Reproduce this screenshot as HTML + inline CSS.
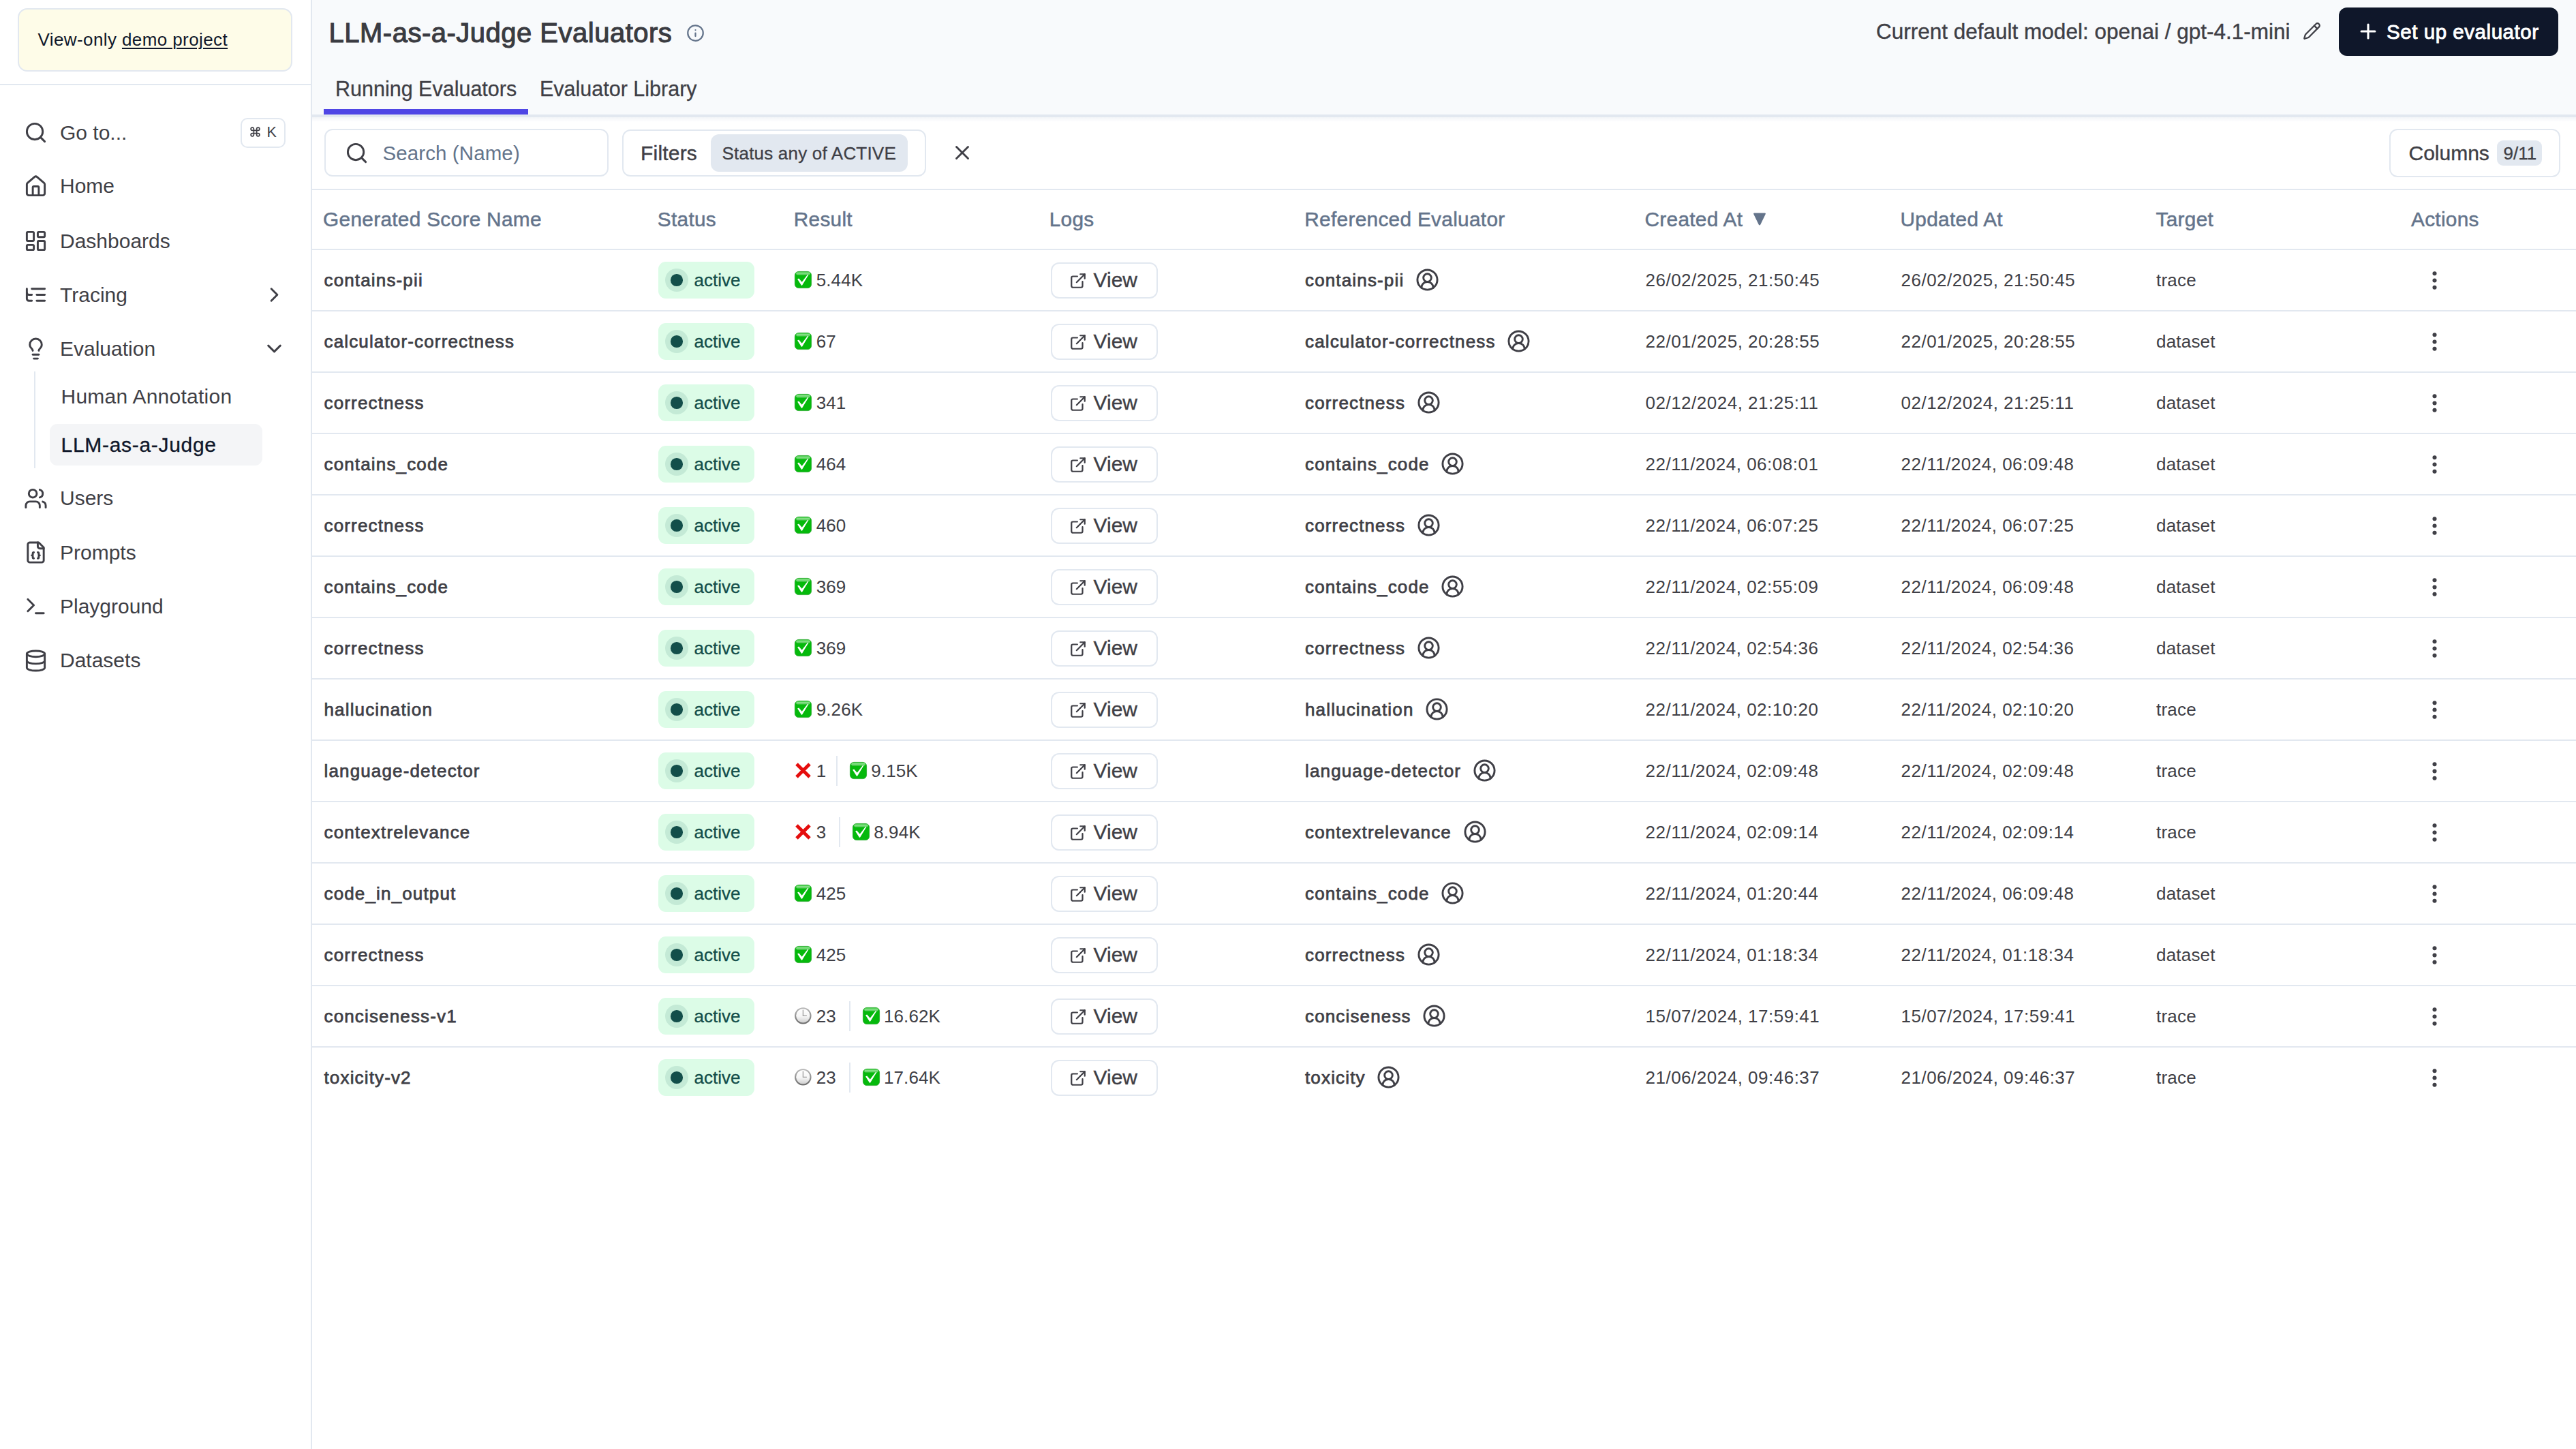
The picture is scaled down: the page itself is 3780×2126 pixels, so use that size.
<!DOCTYPE html>
<html><head><meta charset="utf-8"><title>LLM-as-a-Judge Evaluators</title>
<style>
html,body{margin:0;padding:0}
body{width:3780px;height:2126px;position:relative;overflow:hidden;background:#fff;font-family:'Liberation Sans', sans-serif}
.t{position:absolute;white-space:nowrap;line-height:1}
.b{position:absolute}
.i{position:absolute;overflow:visible}
</style></head><body>
<div class="b" style="left:456.0px;top:0.0px;width:2.0px;height:2126.0px;background:#e2e8f0"></div><div class="b" style="left:26.0px;top:11.5px;width:402.5px;height:93.0px;border:2px solid #e2e8f0;border-radius:14px;background:#fefce8;box-sizing:border-box"></div><div class="t" style="left:55.5px;top:45.2px;font-size:26px;color:#0f172a;font-weight:400;letter-spacing:0.4px;">View-only <span style="text-decoration:underline;text-underline-offset:3px;text-decoration-thickness:1.5px">demo project</span></div><div class="b" style="left:0.0px;top:123.0px;width:456.0px;height:2.0px;background:#e2e8f0"></div><svg class="i" style="left:35.0px;top:177.0px" width="35" height="35" viewBox="0 0 24 24" fill="none" stroke="#3f3f46" stroke-width="2" stroke-linecap="round" stroke-linejoin="round"><circle cx="11" cy="11" r="8"/><path d="m21 21-4.3-4.3"/></svg><div class="t" style="left:88.0px;top:179.5px;font-size:30px;color:#3f3f46;font-weight:400;letter-spacing:0px;">Go to...</div><svg class="i" style="left:35.0px;top:255.7px" width="35" height="35" viewBox="0 0 24 24" fill="none" stroke="#3f3f46" stroke-width="2" stroke-linecap="round" stroke-linejoin="round"><path d="M15 21v-8a1 1 0 0 0-1-1h-4a1 1 0 0 0-1 1v8"/><path d="M3 10a2 2 0 0 1 .709-1.528l7-5.999a2 2 0 0 1 2.582 0l7 5.999A2 2 0 0 1 21 10v9a2 2 0 0 1-2 2H5a2 2 0 0 1-2-2z"/></svg><div class="t" style="left:88.0px;top:258.2px;font-size:30px;color:#3f3f46;font-weight:400;letter-spacing:0px;">Home</div><svg class="i" style="left:35.0px;top:336.3px" width="35" height="35" viewBox="0 0 24 24" fill="none" stroke="#3f3f46" stroke-width="2" stroke-linecap="round" stroke-linejoin="round"><rect width="7" height="9" x="3" y="3" rx="1"/><rect width="7" height="5" x="14" y="3" rx="1"/><rect width="7" height="9" x="14" y="12" rx="1"/><rect width="7" height="5" x="3" y="16" rx="1"/></svg><div class="t" style="left:88.0px;top:338.8px;font-size:30px;color:#3f3f46;font-weight:400;letter-spacing:0px;">Dashboards</div><svg class="i" style="left:35.0px;top:415.4px" width="35" height="35" viewBox="0 0 24 24" fill="none" stroke="#3f3f46" stroke-width="2" stroke-linecap="round" stroke-linejoin="round"><path d="M21 12h-8"/><path d="M21 6H8"/><path d="M21 18h-8"/><path d="M3 6v4c0 1.1.9 2 2 2h3"/><path d="M3 10v6c0 1.1.9 2 2 2h3"/></svg><div class="t" style="left:88.0px;top:417.9px;font-size:30px;color:#3f3f46;font-weight:400;letter-spacing:0px;">Tracing</div><svg class="i" style="left:35.0px;top:494.3px" width="35" height="35" viewBox="0 0 24 24" fill="none" stroke="#3f3f46" stroke-width="2" stroke-linecap="round" stroke-linejoin="round"><path d="M15 14c.2-1 .7-1.7 1.5-2.5 1-.9 1.5-2.2 1.5-3.5A6 6 0 0 0 6 8c0 1 .2 2.2 1.5 3.5.7.7 1.3 1.5 1.5 2.5"/><path d="M9 18h6"/><path d="M10 22h4"/></svg><div class="t" style="left:88.0px;top:496.8px;font-size:30px;color:#3f3f46;font-weight:400;letter-spacing:0px;">Evaluation</div><svg class="i" style="left:35.0px;top:713.8px" width="35" height="35" viewBox="0 0 24 24" fill="none" stroke="#3f3f46" stroke-width="2" stroke-linecap="round" stroke-linejoin="round"><path d="M16 21v-2a4 4 0 0 0-4-4H6a4 4 0 0 0-4 4v2"/><circle cx="9" cy="7" r="4"/><path d="M22 21v-2a4 4 0 0 0-3-3.87"/><path d="M16 3.13a4 4 0 0 1 0 7.75"/></svg><div class="t" style="left:88.0px;top:716.3px;font-size:30px;color:#3f3f46;font-weight:400;letter-spacing:0px;">Users</div><svg class="i" style="left:35.0px;top:793.0px" width="35" height="35" viewBox="0 0 24 24" fill="none" stroke="#3f3f46" stroke-width="2" stroke-linecap="round" stroke-linejoin="round"><path d="M15 2H6a2 2 0 0 0-2 2v16a2 2 0 0 0 2 2h12a2 2 0 0 0 2-2V7Z"/><path d="M14 2v4a2 2 0 0 0 2 2h4"/><path d="M10 12a1 1 0 0 0-1 1v1a1 1 0 0 1-1 1 1 1 0 0 1 1 1v1a1 1 0 0 0 1 1"/><path d="M14 18a1 1 0 0 0 1-1v-1a1 1 0 0 1 1-1 1 1 0 0 1-1-1v-1a1 1 0 0 0-1-1"/></svg><div class="t" style="left:88.0px;top:795.5px;font-size:30px;color:#3f3f46;font-weight:400;letter-spacing:0px;">Prompts</div><svg class="i" style="left:35.0px;top:872.3px" width="35" height="35" viewBox="0 0 24 24" fill="none" stroke="#3f3f46" stroke-width="2" stroke-linecap="round" stroke-linejoin="round"><polyline points="4 17 10 11 4 5"/><line x1="12" x2="20" y1="19" y2="19"/></svg><div class="t" style="left:88.0px;top:874.8px;font-size:30px;color:#3f3f46;font-weight:400;letter-spacing:0px;">Playground</div><svg class="i" style="left:35.0px;top:951.5px" width="35" height="35" viewBox="0 0 24 24" fill="none" stroke="#3f3f46" stroke-width="2" stroke-linecap="round" stroke-linejoin="round"><ellipse cx="12" cy="5" rx="9" ry="3"/><path d="M3 5V19A9 3 0 0 0 21 19V5"/><path d="M3 12A9 3 0 0 0 21 12"/></svg><div class="t" style="left:88.0px;top:954.0px;font-size:30px;color:#3f3f46;font-weight:400;letter-spacing:0px;">Datasets</div><div class="b" style="left:352.5px;top:173.0px;width:66.5px;height:44.0px;border:2px solid #e2e8f0;border-radius:10px;box-sizing:border-box"></div><svg class="i" style="left:366.0px;top:185.0px" width="17" height="17" viewBox="0 0 24 24" fill="none" stroke="#3f3f46" stroke-width="2.4" stroke-linecap="round" stroke-linejoin="round"><path d="M15 6v12a3 3 0 1 0 3-3H6a3 3 0 1 0 3 3V6a3 3 0 1 0-3 3h12a3 3 0 1 0-3-3"/></svg><div class="t" style="left:391.5px;top:183.5px;font-size:21.5px;color:#3f3f46;font-weight:400;letter-spacing:0px;">K</div><svg class="i" style="left:385.0px;top:415.0px" width="35" height="35" viewBox="0 0 24 24" fill="none" stroke="#3f3f46" stroke-width="2" stroke-linecap="round" stroke-linejoin="round"><path d="m9 18 6-6-6-6"/></svg><svg class="i" style="left:385.0px;top:494.0px" width="35" height="35" viewBox="0 0 24 24" fill="none" stroke="#3f3f46" stroke-width="2" stroke-linecap="round" stroke-linejoin="round"><path d="m6 9 6 6 6-6"/></svg><div class="b" style="left:50.0px;top:545.0px;width:2.0px;height:142.0px;background:#e2e8f0"></div><div class="t" style="left:89.5px;top:566.5px;font-size:30px;color:#3f3f46;font-weight:400;letter-spacing:0.25px;">Human Annotation</div><div class="b" style="left:72.5px;top:622.0px;width:312.0px;height:61.0px;background:#f4f5f7;border-radius:11px"></div><div class="t" style="left:89.5px;top:637.5px;font-size:30px;color:#0f172a;font-weight:400;letter-spacing:0.7px;-webkit-text-stroke:0.35px #0f172a;">LLM-as-a-Judge</div><div class="b" style="left:458.0px;top:0.0px;width:3322.0px;height:170.0px;background:#f8fafc"></div><div class="b" style="left:458.0px;top:168.0px;width:3322.0px;height:4.0px;background:#e2e8f0"></div><div class="b" style="left:458.0px;top:172.0px;width:3322.0px;height:6.0px;background:linear-gradient(#f3f5f8,#fdfdfe)"></div><div class="t" style="left:482.5px;top:27.5px;font-size:40px;color:#3a3b41;font-weight:400;letter-spacing:0.5px;-webkit-text-stroke:1.1px #3a3b41;">LLM-as-a-Judge Evaluators</div><svg class="i" style="left:1006.5px;top:34.5px" width="27" height="27" viewBox="0 0 24 24" fill="none" stroke="#64748b" stroke-width="2" stroke-linecap="round" stroke-linejoin="round"><circle cx="12" cy="12" r="10"/><path d="M12 16v-4"/><path d="M12 8h.01"/></svg><div class="t" style="left:2753.0px;top:30.6px;font-size:31.5px;color:#3f3f46;font-weight:400;letter-spacing:0px;-webkit-text-stroke:0.4px #3f3f46;">Current default model: openai / gpt-4.1-mini</div><svg class="i" style="left:3378.5px;top:32.0px" width="27" height="27" viewBox="0 0 24 24" fill="none" stroke="#3f3f46" stroke-width="2" stroke-linecap="round" stroke-linejoin="round"><path d="M21.174 6.812a1 1 0 0 0-3.986-3.987L3.842 16.174a2 2 0 0 0-.5.83l-1.321 4.352a.5.5 0 0 0 .623.622l4.353-1.32a2 2 0 0 0 .83-.497z"/><path d="m15 5 4 4"/></svg><div class="b" style="left:3432.0px;top:11.3px;width:322.0px;height:70.5px;background:#0f172a;border-radius:12px"></div><svg class="i" style="left:3458.0px;top:29.0px" width="34" height="34" viewBox="0 0 24 24" fill="none" stroke="#fff" stroke-width="2.2" stroke-linecap="round" stroke-linejoin="round"><path d="M5 12h14"/><path d="M12 5v14"/></svg><div class="t" style="left:3502.0px;top:32.3px;font-size:29.5px;color:#fff;font-weight:400;letter-spacing:0.55px;-webkit-text-stroke:0.9px #fff;">Set up evaluator</div><div class="t" style="left:492.0px;top:114.5px;font-size:30.5px;color:#3f3f46;font-weight:400;letter-spacing:0px;-webkit-text-stroke:0.3px #3f3f46;">Running Evaluators</div><div class="t" style="left:792.0px;top:114.5px;font-size:30.5px;color:#3f3f46;font-weight:400;letter-spacing:0px;-webkit-text-stroke:0.3px #3f3f46;">Evaluator Library</div><div class="b" style="left:475.0px;top:160.0px;width:300.0px;height:8.0px;background:#4f46e5"></div><div class="b" style="left:476.0px;top:189.2px;width:417.0px;height:70.0px;border:2px solid #e2e8f0;border-radius:12px;box-sizing:border-box"></div><svg class="i" style="left:506.0px;top:207.0px" width="35" height="35" viewBox="0 0 24 24" fill="none" stroke="#3f3f46" stroke-width="2" stroke-linecap="round" stroke-linejoin="round"><circle cx="11" cy="11" r="8"/><path d="m21 21-4.3-4.3"/></svg><div class="t" style="left:561.5px;top:210.2px;font-size:29.5px;color:#64748b;font-weight:400;letter-spacing:0.1px;">Search (Name)</div><div class="b" style="left:912.7px;top:189.8px;width:446.5px;height:69.6px;border:2px solid #e2e8f0;border-radius:12px;box-sizing:border-box"></div><div class="t" style="left:940.0px;top:209.7px;font-size:30px;color:#3f3f46;font-weight:400;letter-spacing:0.2px;-webkit-text-stroke:0.45px #3f3f46;">Filters</div><div class="b" style="left:1043.0px;top:197.3px;width:288.5px;height:54.7px;background:#e2e8f0;border-radius:12px"></div><div class="t" style="left:1059.5px;top:211.9px;font-size:26px;color:#3f3f46;font-weight:400;letter-spacing:0.2px;-webkit-text-stroke:0.3px #3f3f46;">Status any of ACTIVE</div><svg class="i" style="left:1395.0px;top:207.0px" width="34" height="34" viewBox="0 0 24 24" fill="none" stroke="#3f3f46" stroke-width="2" stroke-linecap="round" stroke-linejoin="round"><path d="M18 6 6 18"/><path d="m6 6 12 12"/></svg><div class="b" style="left:3506.0px;top:189.4px;width:251.3px;height:70.3px;border:2px solid #e2e8f0;border-radius:12px;box-sizing:border-box"></div><div class="t" style="left:3534.5px;top:209.5px;font-size:30px;color:#3f3f46;font-weight:400;letter-spacing:0px;-webkit-text-stroke:0.4px #3f3f46;">Columns</div><div class="b" style="left:3664.0px;top:206.0px;width:66.0px;height:37.0px;background:#e2e8f0;border-radius:9px"></div><div class="t" style="left:3673.5px;top:211.9px;font-size:26px;color:#3f3f46;font-weight:400;letter-spacing:0px;-webkit-text-stroke:0.3px #3f3f46;">9/11</div><div class="b" style="left:458.0px;top:277.0px;width:3322.0px;height:2.0px;background:#e2e8f0"></div><div class="t" style="left:474.1px;top:306.7px;font-size:29.8px;color:#64748b;font-weight:400;letter-spacing:0.3px;-webkit-text-stroke:0.5px #64748b;">Generated Score Name</div><div class="t" style="left:964.8px;top:306.7px;font-size:29.8px;color:#64748b;font-weight:400;letter-spacing:0.3px;-webkit-text-stroke:0.5px #64748b;">Status</div><div class="t" style="left:1164.7px;top:306.7px;font-size:29.8px;color:#64748b;font-weight:400;letter-spacing:0.3px;-webkit-text-stroke:0.5px #64748b;">Result</div><div class="t" style="left:1539.7px;top:306.7px;font-size:29.8px;color:#64748b;font-weight:400;letter-spacing:0.3px;-webkit-text-stroke:0.5px #64748b;">Logs</div><div class="t" style="left:1914.3px;top:306.7px;font-size:29.8px;color:#64748b;font-weight:400;letter-spacing:0.3px;-webkit-text-stroke:0.5px #64748b;">Referenced Evaluator</div><div class="t" style="left:2413.5px;top:306.7px;font-size:29.8px;color:#64748b;font-weight:400;letter-spacing:0.3px;-webkit-text-stroke:0.5px #64748b;">Created At</div><div class="t" style="left:2788.5px;top:306.7px;font-size:29.8px;color:#64748b;font-weight:400;letter-spacing:0.3px;-webkit-text-stroke:0.5px #64748b;">Updated At</div><div class="t" style="left:3163.5px;top:306.7px;font-size:29.8px;color:#64748b;font-weight:400;letter-spacing:0.3px;-webkit-text-stroke:0.5px #64748b;">Target</div><div class="t" style="left:3538.0px;top:306.7px;font-size:29.8px;color:#64748b;font-weight:400;letter-spacing:0.3px;-webkit-text-stroke:0.5px #64748b;">Actions</div><svg class="i" style="left:2572px;top:311px" width="20" height="21" viewBox="0 0 20 21"><path d="M2.2 1.5 H17.8 Q19.6 1.5 18.7 3.2 L11.3 18.6 Q10 20.6 8.7 18.6 L1.3 3.2 Q0.4 1.5 2.2 1.5 Z" fill="#64748b"/></svg><div class="b" style="left:458.0px;top:365.0px;width:3322.0px;height:2.0px;background:#e2e8f0"></div><div class="b" style="left:458.0px;top:455.0px;width:3322.0px;height:2.0px;background:#e2e8f0"></div><div class="t" style="left:475.5px;top:398.1px;font-size:26px;color:#3f3f46;font-weight:400;letter-spacing:1.15px;-webkit-text-stroke:0.75px #3f3f46;">contains-pii</div><div class="b" style="left:966.0px;top:384.0px;width:141.0px;height:54.0px;background:#dcfce7;border-radius:11px"></div><div class="b" style="left:976px;top:394px;width:34px;height:34px;border-radius:50%;background:#c4ead6"></div><div class="b" style="left:984.3px;top:402.3px;width:17.4px;height:17.4px;border-radius:50%;background:#134e4a"></div><div class="t" style="left:1018.5px;top:397.6px;font-size:26px;color:#134e4a;font-weight:400;letter-spacing:0px;-webkit-text-stroke:0.3px #134e4a;">active</div><svg class="i" style="left:1166.2px;top:398.4px" width="25" height="25" viewBox="0 0 25 25"><defs><linearGradient id="gh1" x1="0" y1="0" x2="0" y2="1"><stop offset="0" stop-color="#93e894"/><stop offset="1" stop-color="#58ca5b"/></linearGradient></defs><rect x="0.4" y="0.4" width="24.2" height="24.2" rx="5.5" fill="#05b90c" stroke="#2aa82d" stroke-width="0.8"/><rect x="2.2" y="1.6" width="20.6" height="3.9" rx="1.9" fill="url(#gh1)"/><path d="M4.1 11.4 L6.2 10.5 L10.7 15.7 L19.2 4.8 L20.4 5.3 L11.0 20.8 L10.0 20.8 Z" fill="#fff"/></svg><div class="t" style="left:1197.7px;top:398.1px;font-size:26px;color:#3f3f46;font-weight:400;letter-spacing:0.1px;">5.44K</div><div class="b" style="left:1541.5px;top:385.0px;width:157.0px;height:52.6px;border:2px solid #e2e8f0;border-radius:12px;box-sizing:border-box"></div><svg class="i" style="left:1569.0px;top:398.5px" width="26" height="26" viewBox="0 0 24 24" fill="none" stroke="#3f3f46" stroke-width="2.05" stroke-linecap="round" stroke-linejoin="round"><path d="M15 3h6v6"/><path d="M10 14 21 3"/><path d="M18 13v6a2 2 0 0 1-2 2H5a2 2 0 0 1-2-2V8a2 2 0 0 1 2-2h6"/></svg><div class="t" style="left:1604.5px;top:395.8px;font-size:30px;color:#3f3f46;font-weight:400;letter-spacing:0px;-webkit-text-stroke:0.4px #3f3f46;">View</div><div class="t" style="left:1915.0px;top:398.1px;font-size:26px;color:#3f3f46;font-weight:400;letter-spacing:1.15px;-webkit-text-stroke:0.75px #3f3f46;">contains-pii</div><svg class="i" style="left:2076.8px;top:392.5px" width="35" height="35" viewBox="0 0 24 24" fill="none" stroke="#3f3f46" stroke-width="2.0" stroke-linecap="round" stroke-linejoin="round"><path d="M18 20a6 6 0 0 0-12 0"/><circle cx="12" cy="10" r="4"/><circle cx="12" cy="12" r="10"/></svg><div class="t" style="left:2414.5px;top:398.1px;font-size:26px;color:#3f3f46;font-weight:400;letter-spacing:0.5px;">26/02/2025, 21:50:45</div><div class="t" style="left:2789.5px;top:398.1px;font-size:26px;color:#3f3f46;font-weight:400;letter-spacing:0.5px;">26/02/2025, 21:50:45</div><div class="t" style="left:3164.0px;top:398.1px;font-size:26px;color:#3f3f46;font-weight:400;letter-spacing:0.2px;">trace</div><svg class="i" style="left:3555.0px;top:394.0px" width="35" height="35" viewBox="0 0 24 24" fill="none" stroke="#3f3f46" stroke-width="2.2" stroke-linecap="round" stroke-linejoin="round"><circle cx="12" cy="12" r="1"/><circle cx="12" cy="5" r="1"/><circle cx="12" cy="19" r="1"/></svg><div class="b" style="left:458.0px;top:545.0px;width:3322.0px;height:2.0px;background:#e2e8f0"></div><div class="t" style="left:475.5px;top:488.1px;font-size:26px;color:#3f3f46;font-weight:400;letter-spacing:1.15px;-webkit-text-stroke:0.75px #3f3f46;">calculator-correctness</div><div class="b" style="left:966.0px;top:474.0px;width:141.0px;height:54.0px;background:#dcfce7;border-radius:11px"></div><div class="b" style="left:976px;top:484px;width:34px;height:34px;border-radius:50%;background:#c4ead6"></div><div class="b" style="left:984.3px;top:492.3px;width:17.4px;height:17.4px;border-radius:50%;background:#134e4a"></div><div class="t" style="left:1018.5px;top:487.6px;font-size:26px;color:#134e4a;font-weight:400;letter-spacing:0px;-webkit-text-stroke:0.3px #134e4a;">active</div><svg class="i" style="left:1166.2px;top:488.4px" width="25" height="25" viewBox="0 0 25 25"><defs><linearGradient id="gh2" x1="0" y1="0" x2="0" y2="1"><stop offset="0" stop-color="#93e894"/><stop offset="1" stop-color="#58ca5b"/></linearGradient></defs><rect x="0.4" y="0.4" width="24.2" height="24.2" rx="5.5" fill="#05b90c" stroke="#2aa82d" stroke-width="0.8"/><rect x="2.2" y="1.6" width="20.6" height="3.9" rx="1.9" fill="url(#gh2)"/><path d="M4.1 11.4 L6.2 10.5 L10.7 15.7 L19.2 4.8 L20.4 5.3 L11.0 20.8 L10.0 20.8 Z" fill="#fff"/></svg><div class="t" style="left:1197.7px;top:488.1px;font-size:26px;color:#3f3f46;font-weight:400;letter-spacing:0.1px;">67</div><div class="b" style="left:1541.5px;top:475.0px;width:157.0px;height:52.6px;border:2px solid #e2e8f0;border-radius:12px;box-sizing:border-box"></div><svg class="i" style="left:1569.0px;top:488.5px" width="26" height="26" viewBox="0 0 24 24" fill="none" stroke="#3f3f46" stroke-width="2.05" stroke-linecap="round" stroke-linejoin="round"><path d="M15 3h6v6"/><path d="M10 14 21 3"/><path d="M18 13v6a2 2 0 0 1-2 2H5a2 2 0 0 1-2-2V8a2 2 0 0 1 2-2h6"/></svg><div class="t" style="left:1604.5px;top:485.8px;font-size:30px;color:#3f3f46;font-weight:400;letter-spacing:0px;-webkit-text-stroke:0.4px #3f3f46;">View</div><div class="t" style="left:1915.0px;top:488.1px;font-size:26px;color:#3f3f46;font-weight:400;letter-spacing:1.15px;-webkit-text-stroke:0.75px #3f3f46;">calculator-correctness</div><svg class="i" style="left:2211.1px;top:482.5px" width="35" height="35" viewBox="0 0 24 24" fill="none" stroke="#3f3f46" stroke-width="2.0" stroke-linecap="round" stroke-linejoin="round"><path d="M18 20a6 6 0 0 0-12 0"/><circle cx="12" cy="10" r="4"/><circle cx="12" cy="12" r="10"/></svg><div class="t" style="left:2414.5px;top:488.1px;font-size:26px;color:#3f3f46;font-weight:400;letter-spacing:0.5px;">22/01/2025, 20:28:55</div><div class="t" style="left:2789.5px;top:488.1px;font-size:26px;color:#3f3f46;font-weight:400;letter-spacing:0.5px;">22/01/2025, 20:28:55</div><div class="t" style="left:3164.0px;top:488.1px;font-size:26px;color:#3f3f46;font-weight:400;letter-spacing:0.2px;">dataset</div><svg class="i" style="left:3555.0px;top:484.0px" width="35" height="35" viewBox="0 0 24 24" fill="none" stroke="#3f3f46" stroke-width="2.2" stroke-linecap="round" stroke-linejoin="round"><circle cx="12" cy="12" r="1"/><circle cx="12" cy="5" r="1"/><circle cx="12" cy="19" r="1"/></svg><div class="b" style="left:458.0px;top:635.0px;width:3322.0px;height:2.0px;background:#e2e8f0"></div><div class="t" style="left:475.5px;top:578.1px;font-size:26px;color:#3f3f46;font-weight:400;letter-spacing:1.15px;-webkit-text-stroke:0.75px #3f3f46;">correctness</div><div class="b" style="left:966.0px;top:564.0px;width:141.0px;height:54.0px;background:#dcfce7;border-radius:11px"></div><div class="b" style="left:976px;top:574px;width:34px;height:34px;border-radius:50%;background:#c4ead6"></div><div class="b" style="left:984.3px;top:582.3px;width:17.4px;height:17.4px;border-radius:50%;background:#134e4a"></div><div class="t" style="left:1018.5px;top:577.6px;font-size:26px;color:#134e4a;font-weight:400;letter-spacing:0px;-webkit-text-stroke:0.3px #134e4a;">active</div><svg class="i" style="left:1166.2px;top:578.4px" width="25" height="25" viewBox="0 0 25 25"><defs><linearGradient id="gh3" x1="0" y1="0" x2="0" y2="1"><stop offset="0" stop-color="#93e894"/><stop offset="1" stop-color="#58ca5b"/></linearGradient></defs><rect x="0.4" y="0.4" width="24.2" height="24.2" rx="5.5" fill="#05b90c" stroke="#2aa82d" stroke-width="0.8"/><rect x="2.2" y="1.6" width="20.6" height="3.9" rx="1.9" fill="url(#gh3)"/><path d="M4.1 11.4 L6.2 10.5 L10.7 15.7 L19.2 4.8 L20.4 5.3 L11.0 20.8 L10.0 20.8 Z" fill="#fff"/></svg><div class="t" style="left:1197.7px;top:578.1px;font-size:26px;color:#3f3f46;font-weight:400;letter-spacing:0.1px;">341</div><div class="b" style="left:1541.5px;top:565.0px;width:157.0px;height:52.6px;border:2px solid #e2e8f0;border-radius:12px;box-sizing:border-box"></div><svg class="i" style="left:1569.0px;top:578.5px" width="26" height="26" viewBox="0 0 24 24" fill="none" stroke="#3f3f46" stroke-width="2.05" stroke-linecap="round" stroke-linejoin="round"><path d="M15 3h6v6"/><path d="M10 14 21 3"/><path d="M18 13v6a2 2 0 0 1-2 2H5a2 2 0 0 1-2-2V8a2 2 0 0 1 2-2h6"/></svg><div class="t" style="left:1604.5px;top:575.8px;font-size:30px;color:#3f3f46;font-weight:400;letter-spacing:0px;-webkit-text-stroke:0.4px #3f3f46;">View</div><div class="t" style="left:1915.0px;top:578.1px;font-size:26px;color:#3f3f46;font-weight:400;letter-spacing:1.15px;-webkit-text-stroke:0.75px #3f3f46;">correctness</div><svg class="i" style="left:2078.5px;top:572.5px" width="35" height="35" viewBox="0 0 24 24" fill="none" stroke="#3f3f46" stroke-width="2.0" stroke-linecap="round" stroke-linejoin="round"><path d="M18 20a6 6 0 0 0-12 0"/><circle cx="12" cy="10" r="4"/><circle cx="12" cy="12" r="10"/></svg><div class="t" style="left:2414.5px;top:578.1px;font-size:26px;color:#3f3f46;font-weight:400;letter-spacing:0.5px;">02/12/2024, 21:25:11</div><div class="t" style="left:2789.5px;top:578.1px;font-size:26px;color:#3f3f46;font-weight:400;letter-spacing:0.5px;">02/12/2024, 21:25:11</div><div class="t" style="left:3164.0px;top:578.1px;font-size:26px;color:#3f3f46;font-weight:400;letter-spacing:0.2px;">dataset</div><svg class="i" style="left:3555.0px;top:574.0px" width="35" height="35" viewBox="0 0 24 24" fill="none" stroke="#3f3f46" stroke-width="2.2" stroke-linecap="round" stroke-linejoin="round"><circle cx="12" cy="12" r="1"/><circle cx="12" cy="5" r="1"/><circle cx="12" cy="19" r="1"/></svg><div class="b" style="left:458.0px;top:725.0px;width:3322.0px;height:2.0px;background:#e2e8f0"></div><div class="t" style="left:475.5px;top:668.1px;font-size:26px;color:#3f3f46;font-weight:400;letter-spacing:1.15px;-webkit-text-stroke:0.75px #3f3f46;">contains_code</div><div class="b" style="left:966.0px;top:654.0px;width:141.0px;height:54.0px;background:#dcfce7;border-radius:11px"></div><div class="b" style="left:976px;top:664px;width:34px;height:34px;border-radius:50%;background:#c4ead6"></div><div class="b" style="left:984.3px;top:672.3px;width:17.4px;height:17.4px;border-radius:50%;background:#134e4a"></div><div class="t" style="left:1018.5px;top:667.6px;font-size:26px;color:#134e4a;font-weight:400;letter-spacing:0px;-webkit-text-stroke:0.3px #134e4a;">active</div><svg class="i" style="left:1166.2px;top:668.4px" width="25" height="25" viewBox="0 0 25 25"><defs><linearGradient id="gh4" x1="0" y1="0" x2="0" y2="1"><stop offset="0" stop-color="#93e894"/><stop offset="1" stop-color="#58ca5b"/></linearGradient></defs><rect x="0.4" y="0.4" width="24.2" height="24.2" rx="5.5" fill="#05b90c" stroke="#2aa82d" stroke-width="0.8"/><rect x="2.2" y="1.6" width="20.6" height="3.9" rx="1.9" fill="url(#gh4)"/><path d="M4.1 11.4 L6.2 10.5 L10.7 15.7 L19.2 4.8 L20.4 5.3 L11.0 20.8 L10.0 20.8 Z" fill="#fff"/></svg><div class="t" style="left:1197.7px;top:668.1px;font-size:26px;color:#3f3f46;font-weight:400;letter-spacing:0.1px;">464</div><div class="b" style="left:1541.5px;top:655.0px;width:157.0px;height:52.6px;border:2px solid #e2e8f0;border-radius:12px;box-sizing:border-box"></div><svg class="i" style="left:1569.0px;top:668.5px" width="26" height="26" viewBox="0 0 24 24" fill="none" stroke="#3f3f46" stroke-width="2.05" stroke-linecap="round" stroke-linejoin="round"><path d="M15 3h6v6"/><path d="M10 14 21 3"/><path d="M18 13v6a2 2 0 0 1-2 2H5a2 2 0 0 1-2-2V8a2 2 0 0 1 2-2h6"/></svg><div class="t" style="left:1604.5px;top:665.8px;font-size:30px;color:#3f3f46;font-weight:400;letter-spacing:0px;-webkit-text-stroke:0.4px #3f3f46;">View</div><div class="t" style="left:1915.0px;top:668.1px;font-size:26px;color:#3f3f46;font-weight:400;letter-spacing:1.15px;-webkit-text-stroke:0.75px #3f3f46;">contains_code</div><svg class="i" style="left:2114.1px;top:662.5px" width="35" height="35" viewBox="0 0 24 24" fill="none" stroke="#3f3f46" stroke-width="2.0" stroke-linecap="round" stroke-linejoin="round"><path d="M18 20a6 6 0 0 0-12 0"/><circle cx="12" cy="10" r="4"/><circle cx="12" cy="12" r="10"/></svg><div class="t" style="left:2414.5px;top:668.1px;font-size:26px;color:#3f3f46;font-weight:400;letter-spacing:0.5px;">22/11/2024, 06:08:01</div><div class="t" style="left:2789.5px;top:668.1px;font-size:26px;color:#3f3f46;font-weight:400;letter-spacing:0.5px;">22/11/2024, 06:09:48</div><div class="t" style="left:3164.0px;top:668.1px;font-size:26px;color:#3f3f46;font-weight:400;letter-spacing:0.2px;">dataset</div><svg class="i" style="left:3555.0px;top:664.0px" width="35" height="35" viewBox="0 0 24 24" fill="none" stroke="#3f3f46" stroke-width="2.2" stroke-linecap="round" stroke-linejoin="round"><circle cx="12" cy="12" r="1"/><circle cx="12" cy="5" r="1"/><circle cx="12" cy="19" r="1"/></svg><div class="b" style="left:458.0px;top:815.0px;width:3322.0px;height:2.0px;background:#e2e8f0"></div><div class="t" style="left:475.5px;top:758.1px;font-size:26px;color:#3f3f46;font-weight:400;letter-spacing:1.15px;-webkit-text-stroke:0.75px #3f3f46;">correctness</div><div class="b" style="left:966.0px;top:744.0px;width:141.0px;height:54.0px;background:#dcfce7;border-radius:11px"></div><div class="b" style="left:976px;top:754px;width:34px;height:34px;border-radius:50%;background:#c4ead6"></div><div class="b" style="left:984.3px;top:762.3px;width:17.4px;height:17.4px;border-radius:50%;background:#134e4a"></div><div class="t" style="left:1018.5px;top:757.6px;font-size:26px;color:#134e4a;font-weight:400;letter-spacing:0px;-webkit-text-stroke:0.3px #134e4a;">active</div><svg class="i" style="left:1166.2px;top:758.4px" width="25" height="25" viewBox="0 0 25 25"><defs><linearGradient id="gh5" x1="0" y1="0" x2="0" y2="1"><stop offset="0" stop-color="#93e894"/><stop offset="1" stop-color="#58ca5b"/></linearGradient></defs><rect x="0.4" y="0.4" width="24.2" height="24.2" rx="5.5" fill="#05b90c" stroke="#2aa82d" stroke-width="0.8"/><rect x="2.2" y="1.6" width="20.6" height="3.9" rx="1.9" fill="url(#gh5)"/><path d="M4.1 11.4 L6.2 10.5 L10.7 15.7 L19.2 4.8 L20.4 5.3 L11.0 20.8 L10.0 20.8 Z" fill="#fff"/></svg><div class="t" style="left:1197.7px;top:758.1px;font-size:26px;color:#3f3f46;font-weight:400;letter-spacing:0.1px;">460</div><div class="b" style="left:1541.5px;top:745.0px;width:157.0px;height:52.6px;border:2px solid #e2e8f0;border-radius:12px;box-sizing:border-box"></div><svg class="i" style="left:1569.0px;top:758.5px" width="26" height="26" viewBox="0 0 24 24" fill="none" stroke="#3f3f46" stroke-width="2.05" stroke-linecap="round" stroke-linejoin="round"><path d="M15 3h6v6"/><path d="M10 14 21 3"/><path d="M18 13v6a2 2 0 0 1-2 2H5a2 2 0 0 1-2-2V8a2 2 0 0 1 2-2h6"/></svg><div class="t" style="left:1604.5px;top:755.8px;font-size:30px;color:#3f3f46;font-weight:400;letter-spacing:0px;-webkit-text-stroke:0.4px #3f3f46;">View</div><div class="t" style="left:1915.0px;top:758.1px;font-size:26px;color:#3f3f46;font-weight:400;letter-spacing:1.15px;-webkit-text-stroke:0.75px #3f3f46;">correctness</div><svg class="i" style="left:2078.5px;top:752.5px" width="35" height="35" viewBox="0 0 24 24" fill="none" stroke="#3f3f46" stroke-width="2.0" stroke-linecap="round" stroke-linejoin="round"><path d="M18 20a6 6 0 0 0-12 0"/><circle cx="12" cy="10" r="4"/><circle cx="12" cy="12" r="10"/></svg><div class="t" style="left:2414.5px;top:758.1px;font-size:26px;color:#3f3f46;font-weight:400;letter-spacing:0.5px;">22/11/2024, 06:07:25</div><div class="t" style="left:2789.5px;top:758.1px;font-size:26px;color:#3f3f46;font-weight:400;letter-spacing:0.5px;">22/11/2024, 06:07:25</div><div class="t" style="left:3164.0px;top:758.1px;font-size:26px;color:#3f3f46;font-weight:400;letter-spacing:0.2px;">dataset</div><svg class="i" style="left:3555.0px;top:754.0px" width="35" height="35" viewBox="0 0 24 24" fill="none" stroke="#3f3f46" stroke-width="2.2" stroke-linecap="round" stroke-linejoin="round"><circle cx="12" cy="12" r="1"/><circle cx="12" cy="5" r="1"/><circle cx="12" cy="19" r="1"/></svg><div class="b" style="left:458.0px;top:905.0px;width:3322.0px;height:2.0px;background:#e2e8f0"></div><div class="t" style="left:475.5px;top:848.1px;font-size:26px;color:#3f3f46;font-weight:400;letter-spacing:1.15px;-webkit-text-stroke:0.75px #3f3f46;">contains_code</div><div class="b" style="left:966.0px;top:834.0px;width:141.0px;height:54.0px;background:#dcfce7;border-radius:11px"></div><div class="b" style="left:976px;top:844px;width:34px;height:34px;border-radius:50%;background:#c4ead6"></div><div class="b" style="left:984.3px;top:852.3px;width:17.4px;height:17.4px;border-radius:50%;background:#134e4a"></div><div class="t" style="left:1018.5px;top:847.6px;font-size:26px;color:#134e4a;font-weight:400;letter-spacing:0px;-webkit-text-stroke:0.3px #134e4a;">active</div><svg class="i" style="left:1166.2px;top:848.4px" width="25" height="25" viewBox="0 0 25 25"><defs><linearGradient id="gh6" x1="0" y1="0" x2="0" y2="1"><stop offset="0" stop-color="#93e894"/><stop offset="1" stop-color="#58ca5b"/></linearGradient></defs><rect x="0.4" y="0.4" width="24.2" height="24.2" rx="5.5" fill="#05b90c" stroke="#2aa82d" stroke-width="0.8"/><rect x="2.2" y="1.6" width="20.6" height="3.9" rx="1.9" fill="url(#gh6)"/><path d="M4.1 11.4 L6.2 10.5 L10.7 15.7 L19.2 4.8 L20.4 5.3 L11.0 20.8 L10.0 20.8 Z" fill="#fff"/></svg><div class="t" style="left:1197.7px;top:848.1px;font-size:26px;color:#3f3f46;font-weight:400;letter-spacing:0.1px;">369</div><div class="b" style="left:1541.5px;top:835.0px;width:157.0px;height:52.6px;border:2px solid #e2e8f0;border-radius:12px;box-sizing:border-box"></div><svg class="i" style="left:1569.0px;top:848.5px" width="26" height="26" viewBox="0 0 24 24" fill="none" stroke="#3f3f46" stroke-width="2.05" stroke-linecap="round" stroke-linejoin="round"><path d="M15 3h6v6"/><path d="M10 14 21 3"/><path d="M18 13v6a2 2 0 0 1-2 2H5a2 2 0 0 1-2-2V8a2 2 0 0 1 2-2h6"/></svg><div class="t" style="left:1604.5px;top:845.8px;font-size:30px;color:#3f3f46;font-weight:400;letter-spacing:0px;-webkit-text-stroke:0.4px #3f3f46;">View</div><div class="t" style="left:1915.0px;top:848.1px;font-size:26px;color:#3f3f46;font-weight:400;letter-spacing:1.15px;-webkit-text-stroke:0.75px #3f3f46;">contains_code</div><svg class="i" style="left:2114.1px;top:842.5px" width="35" height="35" viewBox="0 0 24 24" fill="none" stroke="#3f3f46" stroke-width="2.0" stroke-linecap="round" stroke-linejoin="round"><path d="M18 20a6 6 0 0 0-12 0"/><circle cx="12" cy="10" r="4"/><circle cx="12" cy="12" r="10"/></svg><div class="t" style="left:2414.5px;top:848.1px;font-size:26px;color:#3f3f46;font-weight:400;letter-spacing:0.5px;">22/11/2024, 02:55:09</div><div class="t" style="left:2789.5px;top:848.1px;font-size:26px;color:#3f3f46;font-weight:400;letter-spacing:0.5px;">22/11/2024, 06:09:48</div><div class="t" style="left:3164.0px;top:848.1px;font-size:26px;color:#3f3f46;font-weight:400;letter-spacing:0.2px;">dataset</div><svg class="i" style="left:3555.0px;top:844.0px" width="35" height="35" viewBox="0 0 24 24" fill="none" stroke="#3f3f46" stroke-width="2.2" stroke-linecap="round" stroke-linejoin="round"><circle cx="12" cy="12" r="1"/><circle cx="12" cy="5" r="1"/><circle cx="12" cy="19" r="1"/></svg><div class="b" style="left:458.0px;top:995.0px;width:3322.0px;height:2.0px;background:#e2e8f0"></div><div class="t" style="left:475.5px;top:938.1px;font-size:26px;color:#3f3f46;font-weight:400;letter-spacing:1.15px;-webkit-text-stroke:0.75px #3f3f46;">correctness</div><div class="b" style="left:966.0px;top:924.0px;width:141.0px;height:54.0px;background:#dcfce7;border-radius:11px"></div><div class="b" style="left:976px;top:934px;width:34px;height:34px;border-radius:50%;background:#c4ead6"></div><div class="b" style="left:984.3px;top:942.3px;width:17.4px;height:17.4px;border-radius:50%;background:#134e4a"></div><div class="t" style="left:1018.5px;top:937.6px;font-size:26px;color:#134e4a;font-weight:400;letter-spacing:0px;-webkit-text-stroke:0.3px #134e4a;">active</div><svg class="i" style="left:1166.2px;top:938.4px" width="25" height="25" viewBox="0 0 25 25"><defs><linearGradient id="gh7" x1="0" y1="0" x2="0" y2="1"><stop offset="0" stop-color="#93e894"/><stop offset="1" stop-color="#58ca5b"/></linearGradient></defs><rect x="0.4" y="0.4" width="24.2" height="24.2" rx="5.5" fill="#05b90c" stroke="#2aa82d" stroke-width="0.8"/><rect x="2.2" y="1.6" width="20.6" height="3.9" rx="1.9" fill="url(#gh7)"/><path d="M4.1 11.4 L6.2 10.5 L10.7 15.7 L19.2 4.8 L20.4 5.3 L11.0 20.8 L10.0 20.8 Z" fill="#fff"/></svg><div class="t" style="left:1197.7px;top:938.1px;font-size:26px;color:#3f3f46;font-weight:400;letter-spacing:0.1px;">369</div><div class="b" style="left:1541.5px;top:925.0px;width:157.0px;height:52.6px;border:2px solid #e2e8f0;border-radius:12px;box-sizing:border-box"></div><svg class="i" style="left:1569.0px;top:938.5px" width="26" height="26" viewBox="0 0 24 24" fill="none" stroke="#3f3f46" stroke-width="2.05" stroke-linecap="round" stroke-linejoin="round"><path d="M15 3h6v6"/><path d="M10 14 21 3"/><path d="M18 13v6a2 2 0 0 1-2 2H5a2 2 0 0 1-2-2V8a2 2 0 0 1 2-2h6"/></svg><div class="t" style="left:1604.5px;top:935.8px;font-size:30px;color:#3f3f46;font-weight:400;letter-spacing:0px;-webkit-text-stroke:0.4px #3f3f46;">View</div><div class="t" style="left:1915.0px;top:938.1px;font-size:26px;color:#3f3f46;font-weight:400;letter-spacing:1.15px;-webkit-text-stroke:0.75px #3f3f46;">correctness</div><svg class="i" style="left:2078.5px;top:932.5px" width="35" height="35" viewBox="0 0 24 24" fill="none" stroke="#3f3f46" stroke-width="2.0" stroke-linecap="round" stroke-linejoin="round"><path d="M18 20a6 6 0 0 0-12 0"/><circle cx="12" cy="10" r="4"/><circle cx="12" cy="12" r="10"/></svg><div class="t" style="left:2414.5px;top:938.1px;font-size:26px;color:#3f3f46;font-weight:400;letter-spacing:0.5px;">22/11/2024, 02:54:36</div><div class="t" style="left:2789.5px;top:938.1px;font-size:26px;color:#3f3f46;font-weight:400;letter-spacing:0.5px;">22/11/2024, 02:54:36</div><div class="t" style="left:3164.0px;top:938.1px;font-size:26px;color:#3f3f46;font-weight:400;letter-spacing:0.2px;">dataset</div><svg class="i" style="left:3555.0px;top:934.0px" width="35" height="35" viewBox="0 0 24 24" fill="none" stroke="#3f3f46" stroke-width="2.2" stroke-linecap="round" stroke-linejoin="round"><circle cx="12" cy="12" r="1"/><circle cx="12" cy="5" r="1"/><circle cx="12" cy="19" r="1"/></svg><div class="b" style="left:458.0px;top:1085.0px;width:3322.0px;height:2.0px;background:#e2e8f0"></div><div class="t" style="left:475.5px;top:1028.1px;font-size:26px;color:#3f3f46;font-weight:400;letter-spacing:1.15px;-webkit-text-stroke:0.75px #3f3f46;">hallucination</div><div class="b" style="left:966.0px;top:1014.0px;width:141.0px;height:54.0px;background:#dcfce7;border-radius:11px"></div><div class="b" style="left:976px;top:1024px;width:34px;height:34px;border-radius:50%;background:#c4ead6"></div><div class="b" style="left:984.3px;top:1032.3px;width:17.4px;height:17.4px;border-radius:50%;background:#134e4a"></div><div class="t" style="left:1018.5px;top:1027.6px;font-size:26px;color:#134e4a;font-weight:400;letter-spacing:0px;-webkit-text-stroke:0.3px #134e4a;">active</div><svg class="i" style="left:1166.2px;top:1028.4px" width="25" height="25" viewBox="0 0 25 25"><defs><linearGradient id="gh8" x1="0" y1="0" x2="0" y2="1"><stop offset="0" stop-color="#93e894"/><stop offset="1" stop-color="#58ca5b"/></linearGradient></defs><rect x="0.4" y="0.4" width="24.2" height="24.2" rx="5.5" fill="#05b90c" stroke="#2aa82d" stroke-width="0.8"/><rect x="2.2" y="1.6" width="20.6" height="3.9" rx="1.9" fill="url(#gh8)"/><path d="M4.1 11.4 L6.2 10.5 L10.7 15.7 L19.2 4.8 L20.4 5.3 L11.0 20.8 L10.0 20.8 Z" fill="#fff"/></svg><div class="t" style="left:1197.7px;top:1028.1px;font-size:26px;color:#3f3f46;font-weight:400;letter-spacing:0.1px;">9.26K</div><div class="b" style="left:1541.5px;top:1015.0px;width:157.0px;height:52.6px;border:2px solid #e2e8f0;border-radius:12px;box-sizing:border-box"></div><svg class="i" style="left:1569.0px;top:1028.5px" width="26" height="26" viewBox="0 0 24 24" fill="none" stroke="#3f3f46" stroke-width="2.05" stroke-linecap="round" stroke-linejoin="round"><path d="M15 3h6v6"/><path d="M10 14 21 3"/><path d="M18 13v6a2 2 0 0 1-2 2H5a2 2 0 0 1-2-2V8a2 2 0 0 1 2-2h6"/></svg><div class="t" style="left:1604.5px;top:1025.8px;font-size:30px;color:#3f3f46;font-weight:400;letter-spacing:0px;-webkit-text-stroke:0.4px #3f3f46;">View</div><div class="t" style="left:1915.0px;top:1028.1px;font-size:26px;color:#3f3f46;font-weight:400;letter-spacing:1.15px;-webkit-text-stroke:0.75px #3f3f46;">hallucination</div><svg class="i" style="left:2091.0px;top:1022.5px" width="35" height="35" viewBox="0 0 24 24" fill="none" stroke="#3f3f46" stroke-width="2.0" stroke-linecap="round" stroke-linejoin="round"><path d="M18 20a6 6 0 0 0-12 0"/><circle cx="12" cy="10" r="4"/><circle cx="12" cy="12" r="10"/></svg><div class="t" style="left:2414.5px;top:1028.1px;font-size:26px;color:#3f3f46;font-weight:400;letter-spacing:0.5px;">22/11/2024, 02:10:20</div><div class="t" style="left:2789.5px;top:1028.1px;font-size:26px;color:#3f3f46;font-weight:400;letter-spacing:0.5px;">22/11/2024, 02:10:20</div><div class="t" style="left:3164.0px;top:1028.1px;font-size:26px;color:#3f3f46;font-weight:400;letter-spacing:0.2px;">trace</div><svg class="i" style="left:3555.0px;top:1024.0px" width="35" height="35" viewBox="0 0 24 24" fill="none" stroke="#3f3f46" stroke-width="2.2" stroke-linecap="round" stroke-linejoin="round"><circle cx="12" cy="12" r="1"/><circle cx="12" cy="5" r="1"/><circle cx="12" cy="19" r="1"/></svg><div class="b" style="left:458.0px;top:1175.0px;width:3322.0px;height:2.0px;background:#e2e8f0"></div><div class="t" style="left:475.5px;top:1118.1px;font-size:26px;color:#3f3f46;font-weight:400;letter-spacing:1.15px;-webkit-text-stroke:0.75px #3f3f46;">language-detector</div><div class="b" style="left:966.0px;top:1104.0px;width:141.0px;height:54.0px;background:#dcfce7;border-radius:11px"></div><div class="b" style="left:976px;top:1114px;width:34px;height:34px;border-radius:50%;background:#c4ead6"></div><div class="b" style="left:984.3px;top:1122.3px;width:17.4px;height:17.4px;border-radius:50%;background:#134e4a"></div><div class="t" style="left:1018.5px;top:1117.6px;font-size:26px;color:#134e4a;font-weight:400;letter-spacing:0px;-webkit-text-stroke:0.3px #134e4a;">active</div><svg class="i" style="left:1166.2px;top:1118.4px" width="25" height="25" viewBox="0 0 25 25"><path d="M3 3 L22 22 M22 3 L3 22" stroke="#e50d0d" stroke-width="5" stroke-linecap="butt"/></svg><div class="t" style="left:1197.7px;top:1118.1px;font-size:26px;color:#3f3f46;font-weight:400;letter-spacing:0.1px;">1</div><div class="b" style="left:1227.3px;top:1109.0px;width:2.0px;height:44.0px;background:#e2e8f0"></div><svg class="i" style="left:1246.8px;top:1118.4px" width="25" height="25" viewBox="0 0 25 25"><defs><linearGradient id="gh10" x1="0" y1="0" x2="0" y2="1"><stop offset="0" stop-color="#93e894"/><stop offset="1" stop-color="#58ca5b"/></linearGradient></defs><rect x="0.4" y="0.4" width="24.2" height="24.2" rx="5.5" fill="#05b90c" stroke="#2aa82d" stroke-width="0.8"/><rect x="2.2" y="1.6" width="20.6" height="3.9" rx="1.9" fill="url(#gh10)"/><path d="M4.1 11.4 L6.2 10.5 L10.7 15.7 L19.2 4.8 L20.4 5.3 L11.0 20.8 L10.0 20.8 Z" fill="#fff"/></svg><div class="t" style="left:1278.3px;top:1118.1px;font-size:26px;color:#3f3f46;font-weight:400;letter-spacing:0.1px;">9.15K</div><div class="b" style="left:1541.5px;top:1105.0px;width:157.0px;height:52.6px;border:2px solid #e2e8f0;border-radius:12px;box-sizing:border-box"></div><svg class="i" style="left:1569.0px;top:1118.5px" width="26" height="26" viewBox="0 0 24 24" fill="none" stroke="#3f3f46" stroke-width="2.05" stroke-linecap="round" stroke-linejoin="round"><path d="M15 3h6v6"/><path d="M10 14 21 3"/><path d="M18 13v6a2 2 0 0 1-2 2H5a2 2 0 0 1-2-2V8a2 2 0 0 1 2-2h6"/></svg><div class="t" style="left:1604.5px;top:1115.8px;font-size:30px;color:#3f3f46;font-weight:400;letter-spacing:0px;-webkit-text-stroke:0.4px #3f3f46;">View</div><div class="t" style="left:1915.0px;top:1118.1px;font-size:26px;color:#3f3f46;font-weight:400;letter-spacing:1.15px;-webkit-text-stroke:0.75px #3f3f46;">language-detector</div><svg class="i" style="left:2160.6px;top:1112.5px" width="35" height="35" viewBox="0 0 24 24" fill="none" stroke="#3f3f46" stroke-width="2.0" stroke-linecap="round" stroke-linejoin="round"><path d="M18 20a6 6 0 0 0-12 0"/><circle cx="12" cy="10" r="4"/><circle cx="12" cy="12" r="10"/></svg><div class="t" style="left:2414.5px;top:1118.1px;font-size:26px;color:#3f3f46;font-weight:400;letter-spacing:0.5px;">22/11/2024, 02:09:48</div><div class="t" style="left:2789.5px;top:1118.1px;font-size:26px;color:#3f3f46;font-weight:400;letter-spacing:0.5px;">22/11/2024, 02:09:48</div><div class="t" style="left:3164.0px;top:1118.1px;font-size:26px;color:#3f3f46;font-weight:400;letter-spacing:0.2px;">trace</div><svg class="i" style="left:3555.0px;top:1114.0px" width="35" height="35" viewBox="0 0 24 24" fill="none" stroke="#3f3f46" stroke-width="2.2" stroke-linecap="round" stroke-linejoin="round"><circle cx="12" cy="12" r="1"/><circle cx="12" cy="5" r="1"/><circle cx="12" cy="19" r="1"/></svg><div class="b" style="left:458.0px;top:1265.0px;width:3322.0px;height:2.0px;background:#e2e8f0"></div><div class="t" style="left:475.5px;top:1208.1px;font-size:26px;color:#3f3f46;font-weight:400;letter-spacing:1.15px;-webkit-text-stroke:0.75px #3f3f46;">contextrelevance</div><div class="b" style="left:966.0px;top:1194.0px;width:141.0px;height:54.0px;background:#dcfce7;border-radius:11px"></div><div class="b" style="left:976px;top:1204px;width:34px;height:34px;border-radius:50%;background:#c4ead6"></div><div class="b" style="left:984.3px;top:1212.3px;width:17.4px;height:17.4px;border-radius:50%;background:#134e4a"></div><div class="t" style="left:1018.5px;top:1207.6px;font-size:26px;color:#134e4a;font-weight:400;letter-spacing:0px;-webkit-text-stroke:0.3px #134e4a;">active</div><svg class="i" style="left:1166.2px;top:1208.4px" width="25" height="25" viewBox="0 0 25 25"><path d="M3 3 L22 22 M22 3 L3 22" stroke="#e50d0d" stroke-width="5" stroke-linecap="butt"/></svg><div class="t" style="left:1197.7px;top:1208.1px;font-size:26px;color:#3f3f46;font-weight:400;letter-spacing:0.1px;">3</div><div class="b" style="left:1231.2px;top:1199.0px;width:2.0px;height:44.0px;background:#e2e8f0"></div><svg class="i" style="left:1250.7px;top:1208.4px" width="25" height="25" viewBox="0 0 25 25"><defs><linearGradient id="gh12" x1="0" y1="0" x2="0" y2="1"><stop offset="0" stop-color="#93e894"/><stop offset="1" stop-color="#58ca5b"/></linearGradient></defs><rect x="0.4" y="0.4" width="24.2" height="24.2" rx="5.5" fill="#05b90c" stroke="#2aa82d" stroke-width="0.8"/><rect x="2.2" y="1.6" width="20.6" height="3.9" rx="1.9" fill="url(#gh12)"/><path d="M4.1 11.4 L6.2 10.5 L10.7 15.7 L19.2 4.8 L20.4 5.3 L11.0 20.8 L10.0 20.8 Z" fill="#fff"/></svg><div class="t" style="left:1282.2px;top:1208.1px;font-size:26px;color:#3f3f46;font-weight:400;letter-spacing:0.1px;">8.94K</div><div class="b" style="left:1541.5px;top:1195.0px;width:157.0px;height:52.6px;border:2px solid #e2e8f0;border-radius:12px;box-sizing:border-box"></div><svg class="i" style="left:1569.0px;top:1208.5px" width="26" height="26" viewBox="0 0 24 24" fill="none" stroke="#3f3f46" stroke-width="2.05" stroke-linecap="round" stroke-linejoin="round"><path d="M15 3h6v6"/><path d="M10 14 21 3"/><path d="M18 13v6a2 2 0 0 1-2 2H5a2 2 0 0 1-2-2V8a2 2 0 0 1 2-2h6"/></svg><div class="t" style="left:1604.5px;top:1205.8px;font-size:30px;color:#3f3f46;font-weight:400;letter-spacing:0px;-webkit-text-stroke:0.4px #3f3f46;">View</div><div class="t" style="left:1915.0px;top:1208.1px;font-size:26px;color:#3f3f46;font-weight:400;letter-spacing:1.15px;-webkit-text-stroke:0.75px #3f3f46;">contextrelevance</div><svg class="i" style="left:2146.5px;top:1202.5px" width="35" height="35" viewBox="0 0 24 24" fill="none" stroke="#3f3f46" stroke-width="2.0" stroke-linecap="round" stroke-linejoin="round"><path d="M18 20a6 6 0 0 0-12 0"/><circle cx="12" cy="10" r="4"/><circle cx="12" cy="12" r="10"/></svg><div class="t" style="left:2414.5px;top:1208.1px;font-size:26px;color:#3f3f46;font-weight:400;letter-spacing:0.5px;">22/11/2024, 02:09:14</div><div class="t" style="left:2789.5px;top:1208.1px;font-size:26px;color:#3f3f46;font-weight:400;letter-spacing:0.5px;">22/11/2024, 02:09:14</div><div class="t" style="left:3164.0px;top:1208.1px;font-size:26px;color:#3f3f46;font-weight:400;letter-spacing:0.2px;">trace</div><svg class="i" style="left:3555.0px;top:1204.0px" width="35" height="35" viewBox="0 0 24 24" fill="none" stroke="#3f3f46" stroke-width="2.2" stroke-linecap="round" stroke-linejoin="round"><circle cx="12" cy="12" r="1"/><circle cx="12" cy="5" r="1"/><circle cx="12" cy="19" r="1"/></svg><div class="b" style="left:458.0px;top:1355.0px;width:3322.0px;height:2.0px;background:#e2e8f0"></div><div class="t" style="left:475.5px;top:1298.1px;font-size:26px;color:#3f3f46;font-weight:400;letter-spacing:1.15px;-webkit-text-stroke:0.75px #3f3f46;">code_in_output</div><div class="b" style="left:966.0px;top:1284.0px;width:141.0px;height:54.0px;background:#dcfce7;border-radius:11px"></div><div class="b" style="left:976px;top:1294px;width:34px;height:34px;border-radius:50%;background:#c4ead6"></div><div class="b" style="left:984.3px;top:1302.3px;width:17.4px;height:17.4px;border-radius:50%;background:#134e4a"></div><div class="t" style="left:1018.5px;top:1297.6px;font-size:26px;color:#134e4a;font-weight:400;letter-spacing:0px;-webkit-text-stroke:0.3px #134e4a;">active</div><svg class="i" style="left:1166.2px;top:1298.4px" width="25" height="25" viewBox="0 0 25 25"><defs><linearGradient id="gh13" x1="0" y1="0" x2="0" y2="1"><stop offset="0" stop-color="#93e894"/><stop offset="1" stop-color="#58ca5b"/></linearGradient></defs><rect x="0.4" y="0.4" width="24.2" height="24.2" rx="5.5" fill="#05b90c" stroke="#2aa82d" stroke-width="0.8"/><rect x="2.2" y="1.6" width="20.6" height="3.9" rx="1.9" fill="url(#gh13)"/><path d="M4.1 11.4 L6.2 10.5 L10.7 15.7 L19.2 4.8 L20.4 5.3 L11.0 20.8 L10.0 20.8 Z" fill="#fff"/></svg><div class="t" style="left:1197.7px;top:1298.1px;font-size:26px;color:#3f3f46;font-weight:400;letter-spacing:0.1px;">425</div><div class="b" style="left:1541.5px;top:1285.0px;width:157.0px;height:52.6px;border:2px solid #e2e8f0;border-radius:12px;box-sizing:border-box"></div><svg class="i" style="left:1569.0px;top:1298.5px" width="26" height="26" viewBox="0 0 24 24" fill="none" stroke="#3f3f46" stroke-width="2.05" stroke-linecap="round" stroke-linejoin="round"><path d="M15 3h6v6"/><path d="M10 14 21 3"/><path d="M18 13v6a2 2 0 0 1-2 2H5a2 2 0 0 1-2-2V8a2 2 0 0 1 2-2h6"/></svg><div class="t" style="left:1604.5px;top:1295.8px;font-size:30px;color:#3f3f46;font-weight:400;letter-spacing:0px;-webkit-text-stroke:0.4px #3f3f46;">View</div><div class="t" style="left:1915.0px;top:1298.1px;font-size:26px;color:#3f3f46;font-weight:400;letter-spacing:1.15px;-webkit-text-stroke:0.75px #3f3f46;">contains_code</div><svg class="i" style="left:2114.1px;top:1292.5px" width="35" height="35" viewBox="0 0 24 24" fill="none" stroke="#3f3f46" stroke-width="2.0" stroke-linecap="round" stroke-linejoin="round"><path d="M18 20a6 6 0 0 0-12 0"/><circle cx="12" cy="10" r="4"/><circle cx="12" cy="12" r="10"/></svg><div class="t" style="left:2414.5px;top:1298.1px;font-size:26px;color:#3f3f46;font-weight:400;letter-spacing:0.5px;">22/11/2024, 01:20:44</div><div class="t" style="left:2789.5px;top:1298.1px;font-size:26px;color:#3f3f46;font-weight:400;letter-spacing:0.5px;">22/11/2024, 06:09:48</div><div class="t" style="left:3164.0px;top:1298.1px;font-size:26px;color:#3f3f46;font-weight:400;letter-spacing:0.2px;">dataset</div><svg class="i" style="left:3555.0px;top:1294.0px" width="35" height="35" viewBox="0 0 24 24" fill="none" stroke="#3f3f46" stroke-width="2.2" stroke-linecap="round" stroke-linejoin="round"><circle cx="12" cy="12" r="1"/><circle cx="12" cy="5" r="1"/><circle cx="12" cy="19" r="1"/></svg><div class="b" style="left:458.0px;top:1445.0px;width:3322.0px;height:2.0px;background:#e2e8f0"></div><div class="t" style="left:475.5px;top:1388.1px;font-size:26px;color:#3f3f46;font-weight:400;letter-spacing:1.15px;-webkit-text-stroke:0.75px #3f3f46;">correctness</div><div class="b" style="left:966.0px;top:1374.0px;width:141.0px;height:54.0px;background:#dcfce7;border-radius:11px"></div><div class="b" style="left:976px;top:1384px;width:34px;height:34px;border-radius:50%;background:#c4ead6"></div><div class="b" style="left:984.3px;top:1392.3px;width:17.4px;height:17.4px;border-radius:50%;background:#134e4a"></div><div class="t" style="left:1018.5px;top:1387.6px;font-size:26px;color:#134e4a;font-weight:400;letter-spacing:0px;-webkit-text-stroke:0.3px #134e4a;">active</div><svg class="i" style="left:1166.2px;top:1388.4px" width="25" height="25" viewBox="0 0 25 25"><defs><linearGradient id="gh14" x1="0" y1="0" x2="0" y2="1"><stop offset="0" stop-color="#93e894"/><stop offset="1" stop-color="#58ca5b"/></linearGradient></defs><rect x="0.4" y="0.4" width="24.2" height="24.2" rx="5.5" fill="#05b90c" stroke="#2aa82d" stroke-width="0.8"/><rect x="2.2" y="1.6" width="20.6" height="3.9" rx="1.9" fill="url(#gh14)"/><path d="M4.1 11.4 L6.2 10.5 L10.7 15.7 L19.2 4.8 L20.4 5.3 L11.0 20.8 L10.0 20.8 Z" fill="#fff"/></svg><div class="t" style="left:1197.7px;top:1388.1px;font-size:26px;color:#3f3f46;font-weight:400;letter-spacing:0.1px;">425</div><div class="b" style="left:1541.5px;top:1375.0px;width:157.0px;height:52.6px;border:2px solid #e2e8f0;border-radius:12px;box-sizing:border-box"></div><svg class="i" style="left:1569.0px;top:1388.5px" width="26" height="26" viewBox="0 0 24 24" fill="none" stroke="#3f3f46" stroke-width="2.05" stroke-linecap="round" stroke-linejoin="round"><path d="M15 3h6v6"/><path d="M10 14 21 3"/><path d="M18 13v6a2 2 0 0 1-2 2H5a2 2 0 0 1-2-2V8a2 2 0 0 1 2-2h6"/></svg><div class="t" style="left:1604.5px;top:1385.8px;font-size:30px;color:#3f3f46;font-weight:400;letter-spacing:0px;-webkit-text-stroke:0.4px #3f3f46;">View</div><div class="t" style="left:1915.0px;top:1388.1px;font-size:26px;color:#3f3f46;font-weight:400;letter-spacing:1.15px;-webkit-text-stroke:0.75px #3f3f46;">correctness</div><svg class="i" style="left:2078.5px;top:1382.5px" width="35" height="35" viewBox="0 0 24 24" fill="none" stroke="#3f3f46" stroke-width="2.0" stroke-linecap="round" stroke-linejoin="round"><path d="M18 20a6 6 0 0 0-12 0"/><circle cx="12" cy="10" r="4"/><circle cx="12" cy="12" r="10"/></svg><div class="t" style="left:2414.5px;top:1388.1px;font-size:26px;color:#3f3f46;font-weight:400;letter-spacing:0.5px;">22/11/2024, 01:18:34</div><div class="t" style="left:2789.5px;top:1388.1px;font-size:26px;color:#3f3f46;font-weight:400;letter-spacing:0.5px;">22/11/2024, 01:18:34</div><div class="t" style="left:3164.0px;top:1388.1px;font-size:26px;color:#3f3f46;font-weight:400;letter-spacing:0.2px;">dataset</div><svg class="i" style="left:3555.0px;top:1384.0px" width="35" height="35" viewBox="0 0 24 24" fill="none" stroke="#3f3f46" stroke-width="2.2" stroke-linecap="round" stroke-linejoin="round"><circle cx="12" cy="12" r="1"/><circle cx="12" cy="5" r="1"/><circle cx="12" cy="19" r="1"/></svg><div class="b" style="left:458.0px;top:1535.0px;width:3322.0px;height:2.0px;background:#e2e8f0"></div><div class="t" style="left:475.5px;top:1478.1px;font-size:26px;color:#3f3f46;font-weight:400;letter-spacing:1.15px;-webkit-text-stroke:0.75px #3f3f46;">conciseness-v1</div><div class="b" style="left:966.0px;top:1464.0px;width:141.0px;height:54.0px;background:#dcfce7;border-radius:11px"></div><div class="b" style="left:976px;top:1474px;width:34px;height:34px;border-radius:50%;background:#c4ead6"></div><div class="b" style="left:984.3px;top:1482.3px;width:17.4px;height:17.4px;border-radius:50%;background:#134e4a"></div><div class="t" style="left:1018.5px;top:1477.6px;font-size:26px;color:#134e4a;font-weight:400;letter-spacing:0px;-webkit-text-stroke:0.3px #134e4a;">active</div><svg class="i" style="left:1166.2px;top:1477.7px" width="25" height="25" viewBox="0 0 25 25"><defs><linearGradient id="gr15" x1="0" y1="0" x2="0" y2="1"><stop offset="0" stop-color="#b9b9b9"/><stop offset="1" stop-color="#6a6a6a"/></linearGradient><linearGradient id="gf15" x1="0" y1="0" x2="0" y2="1"><stop offset="0" stop-color="#ffffff"/><stop offset="0.55" stop-color="#f6f6f6"/><stop offset="1" stop-color="#cfcfcf"/></linearGradient></defs><circle cx="12.35" cy="12.35" r="12.2" fill="url(#gr15)"/><circle cx="12.35" cy="12.2" r="10.2" fill="url(#gf15)"/><path d="M12.4 3.6 V12.4 H17.9" fill="none" stroke="#9c9c9c" stroke-width="1.3"/></svg><div class="t" style="left:1197.7px;top:1478.1px;font-size:26px;color:#3f3f46;font-weight:400;letter-spacing:0.1px;">23</div><div class="b" style="left:1246.0px;top:1469.0px;width:2.0px;height:44.0px;background:#e2e8f0"></div><svg class="i" style="left:1265.5px;top:1478.4px" width="25" height="25" viewBox="0 0 25 25"><defs><linearGradient id="gh16" x1="0" y1="0" x2="0" y2="1"><stop offset="0" stop-color="#93e894"/><stop offset="1" stop-color="#58ca5b"/></linearGradient></defs><rect x="0.4" y="0.4" width="24.2" height="24.2" rx="5.5" fill="#05b90c" stroke="#2aa82d" stroke-width="0.8"/><rect x="2.2" y="1.6" width="20.6" height="3.9" rx="1.9" fill="url(#gh16)"/><path d="M4.1 11.4 L6.2 10.5 L10.7 15.7 L19.2 4.8 L20.4 5.3 L11.0 20.8 L10.0 20.8 Z" fill="#fff"/></svg><div class="t" style="left:1297.0px;top:1478.1px;font-size:26px;color:#3f3f46;font-weight:400;letter-spacing:0.1px;">16.62K</div><div class="b" style="left:1541.5px;top:1465.0px;width:157.0px;height:52.6px;border:2px solid #e2e8f0;border-radius:12px;box-sizing:border-box"></div><svg class="i" style="left:1569.0px;top:1478.5px" width="26" height="26" viewBox="0 0 24 24" fill="none" stroke="#3f3f46" stroke-width="2.05" stroke-linecap="round" stroke-linejoin="round"><path d="M15 3h6v6"/><path d="M10 14 21 3"/><path d="M18 13v6a2 2 0 0 1-2 2H5a2 2 0 0 1-2-2V8a2 2 0 0 1 2-2h6"/></svg><div class="t" style="left:1604.5px;top:1475.8px;font-size:30px;color:#3f3f46;font-weight:400;letter-spacing:0px;-webkit-text-stroke:0.4px #3f3f46;">View</div><div class="t" style="left:1915.0px;top:1478.1px;font-size:26px;color:#3f3f46;font-weight:400;letter-spacing:1.15px;-webkit-text-stroke:0.75px #3f3f46;">conciseness</div><svg class="i" style="left:2087.2px;top:1472.5px" width="35" height="35" viewBox="0 0 24 24" fill="none" stroke="#3f3f46" stroke-width="2.0" stroke-linecap="round" stroke-linejoin="round"><path d="M18 20a6 6 0 0 0-12 0"/><circle cx="12" cy="10" r="4"/><circle cx="12" cy="12" r="10"/></svg><div class="t" style="left:2414.5px;top:1478.1px;font-size:26px;color:#3f3f46;font-weight:400;letter-spacing:0.5px;">15/07/2024, 17:59:41</div><div class="t" style="left:2789.5px;top:1478.1px;font-size:26px;color:#3f3f46;font-weight:400;letter-spacing:0.5px;">15/07/2024, 17:59:41</div><div class="t" style="left:3164.0px;top:1478.1px;font-size:26px;color:#3f3f46;font-weight:400;letter-spacing:0.2px;">trace</div><svg class="i" style="left:3555.0px;top:1474.0px" width="35" height="35" viewBox="0 0 24 24" fill="none" stroke="#3f3f46" stroke-width="2.2" stroke-linecap="round" stroke-linejoin="round"><circle cx="12" cy="12" r="1"/><circle cx="12" cy="5" r="1"/><circle cx="12" cy="19" r="1"/></svg><div class="t" style="left:475.5px;top:1568.1px;font-size:26px;color:#3f3f46;font-weight:400;letter-spacing:1.15px;-webkit-text-stroke:0.75px #3f3f46;">toxicity-v2</div><div class="b" style="left:966.0px;top:1554.0px;width:141.0px;height:54.0px;background:#dcfce7;border-radius:11px"></div><div class="b" style="left:976px;top:1564px;width:34px;height:34px;border-radius:50%;background:#c4ead6"></div><div class="b" style="left:984.3px;top:1572.3px;width:17.4px;height:17.4px;border-radius:50%;background:#134e4a"></div><div class="t" style="left:1018.5px;top:1567.6px;font-size:26px;color:#134e4a;font-weight:400;letter-spacing:0px;-webkit-text-stroke:0.3px #134e4a;">active</div><svg class="i" style="left:1166.2px;top:1567.7px" width="25" height="25" viewBox="0 0 25 25"><defs><linearGradient id="gr17" x1="0" y1="0" x2="0" y2="1"><stop offset="0" stop-color="#b9b9b9"/><stop offset="1" stop-color="#6a6a6a"/></linearGradient><linearGradient id="gf17" x1="0" y1="0" x2="0" y2="1"><stop offset="0" stop-color="#ffffff"/><stop offset="0.55" stop-color="#f6f6f6"/><stop offset="1" stop-color="#cfcfcf"/></linearGradient></defs><circle cx="12.35" cy="12.35" r="12.2" fill="url(#gr17)"/><circle cx="12.35" cy="12.2" r="10.2" fill="url(#gf17)"/><path d="M12.4 3.6 V12.4 H17.9" fill="none" stroke="#9c9c9c" stroke-width="1.3"/></svg><div class="t" style="left:1197.7px;top:1568.1px;font-size:26px;color:#3f3f46;font-weight:400;letter-spacing:0.1px;">23</div><div class="b" style="left:1246.0px;top:1559.0px;width:2.0px;height:44.0px;background:#e2e8f0"></div><svg class="i" style="left:1265.5px;top:1568.4px" width="25" height="25" viewBox="0 0 25 25"><defs><linearGradient id="gh18" x1="0" y1="0" x2="0" y2="1"><stop offset="0" stop-color="#93e894"/><stop offset="1" stop-color="#58ca5b"/></linearGradient></defs><rect x="0.4" y="0.4" width="24.2" height="24.2" rx="5.5" fill="#05b90c" stroke="#2aa82d" stroke-width="0.8"/><rect x="2.2" y="1.6" width="20.6" height="3.9" rx="1.9" fill="url(#gh18)"/><path d="M4.1 11.4 L6.2 10.5 L10.7 15.7 L19.2 4.8 L20.4 5.3 L11.0 20.8 L10.0 20.8 Z" fill="#fff"/></svg><div class="t" style="left:1297.0px;top:1568.1px;font-size:26px;color:#3f3f46;font-weight:400;letter-spacing:0.1px;">17.64K</div><div class="b" style="left:1541.5px;top:1555.0px;width:157.0px;height:52.6px;border:2px solid #e2e8f0;border-radius:12px;box-sizing:border-box"></div><svg class="i" style="left:1569.0px;top:1568.5px" width="26" height="26" viewBox="0 0 24 24" fill="none" stroke="#3f3f46" stroke-width="2.05" stroke-linecap="round" stroke-linejoin="round"><path d="M15 3h6v6"/><path d="M10 14 21 3"/><path d="M18 13v6a2 2 0 0 1-2 2H5a2 2 0 0 1-2-2V8a2 2 0 0 1 2-2h6"/></svg><div class="t" style="left:1604.5px;top:1565.8px;font-size:30px;color:#3f3f46;font-weight:400;letter-spacing:0px;-webkit-text-stroke:0.4px #3f3f46;">View</div><div class="t" style="left:1915.0px;top:1568.1px;font-size:26px;color:#3f3f46;font-weight:400;letter-spacing:1.15px;-webkit-text-stroke:0.75px #3f3f46;">toxicity</div><svg class="i" style="left:2020.2px;top:1562.5px" width="35" height="35" viewBox="0 0 24 24" fill="none" stroke="#3f3f46" stroke-width="2.0" stroke-linecap="round" stroke-linejoin="round"><path d="M18 20a6 6 0 0 0-12 0"/><circle cx="12" cy="10" r="4"/><circle cx="12" cy="12" r="10"/></svg><div class="t" style="left:2414.5px;top:1568.1px;font-size:26px;color:#3f3f46;font-weight:400;letter-spacing:0.5px;">21/06/2024, 09:46:37</div><div class="t" style="left:2789.5px;top:1568.1px;font-size:26px;color:#3f3f46;font-weight:400;letter-spacing:0.5px;">21/06/2024, 09:46:37</div><div class="t" style="left:3164.0px;top:1568.1px;font-size:26px;color:#3f3f46;font-weight:400;letter-spacing:0.2px;">trace</div><svg class="i" style="left:3555.0px;top:1564.0px" width="35" height="35" viewBox="0 0 24 24" fill="none" stroke="#3f3f46" stroke-width="2.2" stroke-linecap="round" stroke-linejoin="round"><circle cx="12" cy="12" r="1"/><circle cx="12" cy="5" r="1"/><circle cx="12" cy="19" r="1"/></svg>
</body></html>
